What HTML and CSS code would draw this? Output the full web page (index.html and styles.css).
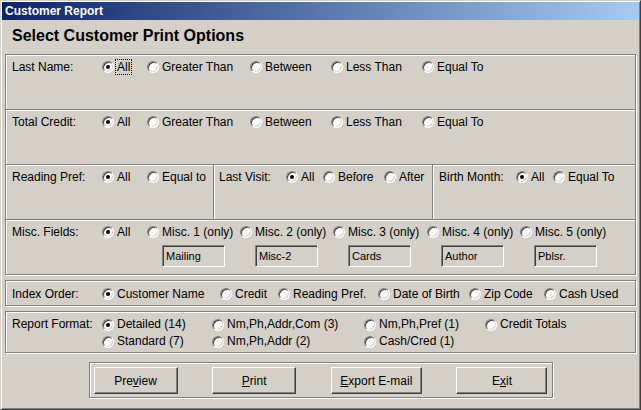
FILE: index.html
```html
<!DOCTYPE html>
<html lang="en">
<head>
    <meta charset="UTF-8">
    <title>Customer Report</title>
    <link rel="stylesheet" href="styles.css">
</head>
<body>
    <div class="window">
        <div class="titlebar">Customer Report</div>
        <div class="client">
            <h1 class="heading">Select Customer Print Options</h1>

            <div class="frame group">
                <div class="row">
                    <span class="field">Last Name:</span>
                    <div class="opts opts-cmp">
                        <label class="opt"><span class="radio checked"></span><span class="focus">All</span></label>
                        <label class="opt"><span class="radio"></span>Greater Than</label>
                        <label class="opt"><span class="radio"></span>Between</label>
                        <label class="opt"><span class="radio"></span>Less Than</label>
                        <label class="opt"><span class="radio"></span>Equal To</label>
                    </div>
                </div>
                <div class="row">
                    <span class="field">Total Credit:</span>
                    <div class="opts opts-cmp">
                        <label class="opt"><span class="radio checked"></span>All</label>
                        <label class="opt"><span class="radio"></span>Greater Than</label>
                        <label class="opt"><span class="radio"></span>Between</label>
                        <label class="opt"><span class="radio"></span>Less Than</label>
                        <label class="opt"><span class="radio"></span>Equal To</label>
                    </div>
                </div>
                <div class="row row-split">
                    <div class="cell cell-pref">
                        <span class="field">Reading Pref:</span>
                        <div class="opts opts-pref">
                            <label class="opt"><span class="radio checked"></span>All</label>
                            <label class="opt"><span class="radio"></span>Equal to</label>
                        </div>
                    </div>
                    <div class="cell cell-visit">
                        <span class="field field-visit">Last Visit:</span>
                        <div class="opts opts-visit">
                            <label class="opt"><span class="radio checked"></span>All</label>
                            <label class="opt"><span class="radio"></span>Before</label>
                            <label class="opt"><span class="radio"></span>After</label>
                        </div>
                    </div>
                    <div class="cell cell-birth">
                        <span class="field field-birth">Birth Month:</span>
                        <div class="opts opts-birth">
                            <label class="opt"><span class="radio checked"></span>All</label>
                            <label class="opt"><span class="radio"></span>Equal To</label>
                        </div>
                    </div>
                </div>
                <div class="row row-misc">
                    <div class="line">
                        <span class="field">Misc. Fields:</span>
                        <div class="opts opts-misc">
                            <label class="opt"><span class="radio checked"></span>All</label>
                            <label class="opt"><span class="radio"></span>Misc. 1 (only)</label>
                            <label class="opt"><span class="radio"></span>Misc. 2 (only)</label>
                            <label class="opt"><span class="radio"></span>Misc. 3 (only)</label>
                            <label class="opt"><span class="radio"></span>Misc. 4 (only)</label>
                            <label class="opt"><span class="radio"></span>Misc. 5 (only)</label>
                        </div>
                    </div>
                    <div class="boxes">
                        <div class="textbox">Mailing</div>
                        <div class="textbox">Misc-2</div>
                        <div class="textbox">Cards</div>
                        <div class="textbox">Author</div>
                        <div class="textbox">Pblsr.</div>
                    </div>
                </div>
            </div>

            <div class="frame index-frame">
                <span class="field">Index Order:</span>
                <div class="opts opts-index">
                    <label class="opt"><span class="radio checked"></span>Customer Name</label>
                    <label class="opt"><span class="radio"></span>Credit</label>
                    <label class="opt"><span class="radio"></span>Reading Pref.</label>
                    <label class="opt"><span class="radio"></span>Date of Birth</label>
                    <label class="opt"><span class="radio"></span>Zip Code</label>
                    <label class="opt"><span class="radio"></span>Cash Used</label>
                </div>
            </div>

            <div class="frame format-frame">
                <span class="field">Report Format:</span>
                <div class="opts opts-format">
                    <label class="opt"><span class="radio checked"></span>Detailed (14)</label>
                    <label class="opt"><span class="radio"></span>Nm,Ph,Addr,Com (3)</label>
                    <label class="opt"><span class="radio"></span>Nm,Ph,Pref (1)</label>
                    <label class="opt"><span class="radio"></span>Credit Totals</label>
                    <label class="opt"><span class="radio"></span>Standard (7)</label>
                    <label class="opt"><span class="radio"></span>Nm,Ph,Addr (2)</label>
                    <label class="opt"><span class="radio"></span>Cash/Cred (1)</label>
                </div>
            </div>

            <div class="frame buttons">
                <button class="btn btn-sm">Pre<u>v</u>iew</button>
                <button class="btn btn-sm"><u>P</u>rint</button>
                <button class="btn"><u>E</u>xport E-mail</button>
                <button class="btn">E<u>x</u>it</button>
            </div>
        </div>
    </div>
</body>
</html>
```

FILE: styles.css
```css
body {
    margin: 0;
    padding: 0;
    font-family: "Liberation Sans", Arial, sans-serif;
    font-size: 12px;
    color: #000;
    background-color: #d4d0c8;
    overflow: hidden;
}
.window {
    width: 641px;
    height: 410px;
    box-sizing: border-box;
    padding: 1px;
    background-color: #d4d0c8;
    border: 1px solid;
    border-color: #d4d0c8 #404040 #404040 #d4d0c8;
    box-shadow: inset 1px 1px #fff, inset -1px -1px #808080;
}
.titlebar {
    height: 18px;
    line-height: 18px;
    padding-left: 3px;
    color: white;
    font-weight: bold;
    font-size: 12px;
    background: linear-gradient(to right, #0a246a, #a6caf0);
}
.client {
    padding: 0 3px;
}
.heading {
    margin: 6px 0 8px 7px;
    font-size: 16px;
    line-height: 20px;
    font-weight: bold;
}
.frame {
    border: 1px solid #808080;
    box-shadow: inset 1px 1px #fff, 1px 1px #fff;
}
.row {
    display: flex;
    align-items: flex-start;
    height: 54px;
    box-sizing: border-box;
    padding: 4px 0 0 6px;
}
.row + .row {
    height: 55px;
    border-top: 1px solid #808080;
    box-shadow: inset 0 1px #fff;
}
.row-split {
    align-items: stretch;
    padding: 0;
}
.row-misc {
    flex-direction: column;
}
.line {
    display: flex;
    align-items: flex-start;
}
.field {
    flex: none;
    width: 90px;
    line-height: 16px;
}
.opts {
    display: grid;
    align-content: start;
    line-height: 16px;
}
.opts-cmp {
    grid-template-columns: 45px 103px 81px 91px auto;
}
.opts-pref {
    grid-template-columns: 45px auto;
}
.opts-visit {
    grid-template-columns: 37px 61px auto;
}
.opts-birth {
    grid-template-columns: 37px auto;
}
.opts-misc {
    grid-template-columns: 45px 93px 93px 94px 93px auto;
}
.opts-index {
    grid-template-columns: 118px 58px 100px 91px 75px auto;
}
.opts-format {
    grid-template-columns: 110px 152px 121px auto;
    line-height: 17px;
}
.opt {
    display: flex;
    align-items: center;
    white-space: nowrap;
}
.radio {
    position: relative;
    flex: none;
    width: 12px;
    height: 12px;
    box-sizing: border-box;
    margin-right: 3px;
    border-radius: 50%;
    background-color: #fff;
    border: 1px solid;
    border-color: #808080 #fff #fff #808080;
    box-shadow: inset 1px 1px #404040, inset -1px -1px #d4d0c8;
}
.radio.checked::after {
    content: "";
    position: absolute;
    left: 3px;
    top: 3px;
    width: 4px;
    height: 4px;
    border-radius: 50%;
    background-color: #000;
}
.focus {
    margin-left: -2px;
    padding: 0 1px;
    border: 1px dotted #000;
    line-height: 14px;
}
.cell {
    display: flex;
    align-items: flex-start;
    box-sizing: border-box;
    padding: 4px 0 0 6px;
}
.cell-pref {
    width: 207px;
}
.cell-visit {
    width: 219px;
    padding-left: 5px;
}
.cell + .cell {
    border-left: 1px solid #808080;
    box-shadow: inset 1px 0 #fff;
}
.field-visit {
    width: 67px;
}
.field-birth {
    width: 77px;
}
.boxes {
    display: flex;
    gap: 30px;
    margin: 5px 0 0 150px;
}
.textbox {
    width: 63px;
    height: 22px;
    box-sizing: border-box;
    padding-left: 3px;
    font-size: 11px;
    line-height: 20px;
    background-color: #d4d0c8;
    border: 1px solid;
    border-color: #808080 #fff #fff #808080;
    box-shadow: inset 1px 1px #404040, inset -1px -1px #d4d0c8;
}
.index-frame {
    display: flex;
    align-items: flex-start;
    margin-top: 5px;
    height: 26px;
    box-sizing: border-box;
    padding: 5px 0 0 6px;
}
.format-frame {
    display: flex;
    align-items: flex-start;
    margin-top: 5px;
    height: 42px;
    box-sizing: border-box;
    padding: 4px 0 0 6px;
}
.format-frame .field {
    line-height: 17px;
}
.buttons {
    display: flex;
    justify-content: space-between;
    width: 464px;
    height: 36px;
    box-sizing: border-box;
    margin: 9px auto 0;
    padding: 4px 4px 0;
}
.btn {
    width: 91px;
    height: 27px;
    padding: 0;
    font-family: "Liberation Sans", Arial, sans-serif;
    font-size: 12px;
    color: #000;
    background-color: #d4d0c8;
    border: 1px solid;
    border-color: #fff #404040 #404040 #fff;
    border-radius: 0;
    box-shadow: inset -1px -1px #808080;
}
.btn-sm {
    width: 84px;
}
```
